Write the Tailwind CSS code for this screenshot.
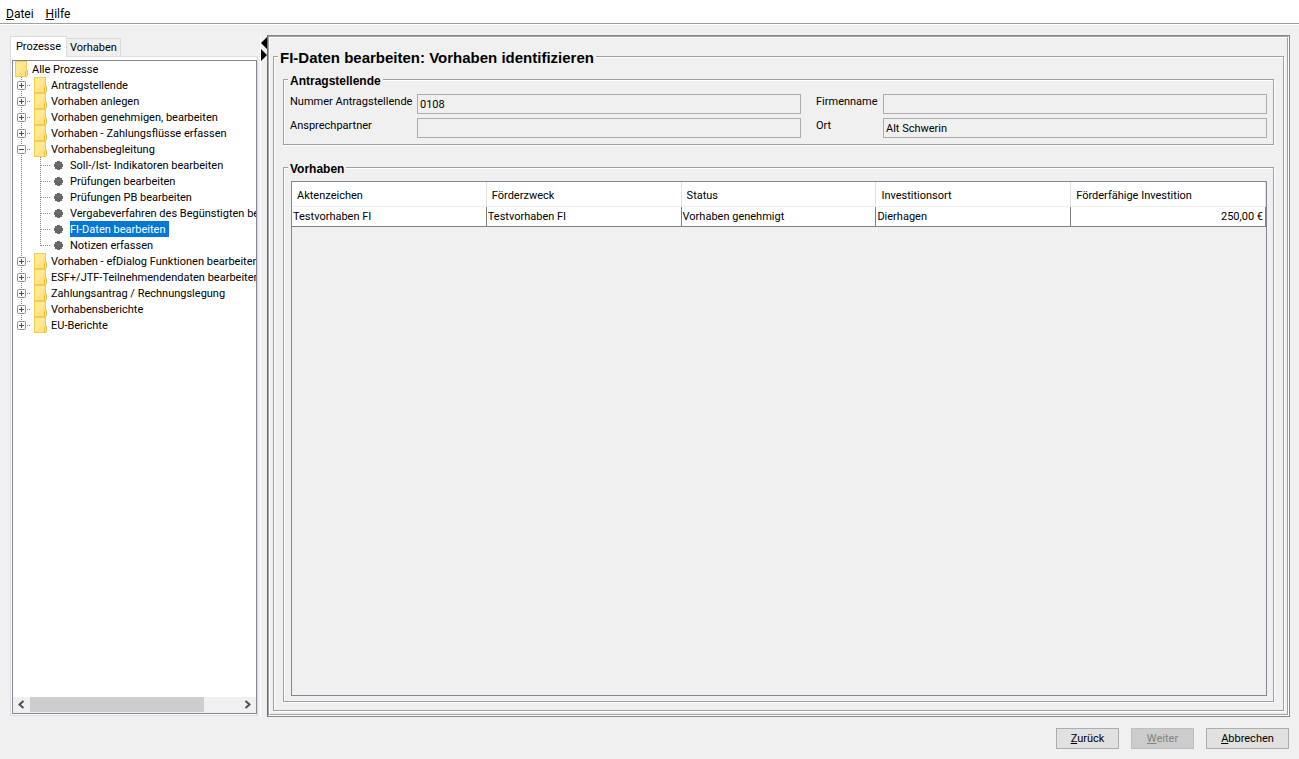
<!DOCTYPE html>
<html lang="de">
<head>
    <meta charset="UTF-8">
    <meta name="viewport" content="width=device-width, initial-scale=1.0">
    <title>FI-Daten bearbeiten</title>
    <script src="https://cdn.jsdelivr.net/npm/@tailwindcss/browser@4"></script>
</head>
<body class="flex h-screen flex-col overflow-hidden bg-[#f0f0f0] font-[Roboto,sans-serif] text-[11px] leading-4 text-black">
    <!-- Symbole -->
    <svg class="hidden">
        <symbol id="plus" viewBox="0 0 20 16">
            <path d="M8.500 0v16M14 8.500h4" stroke="#808080" stroke-dasharray="1 1" fill="none"/>
            <rect x="4.500" y="4.500" width="8" height="8" rx="1" fill="#f8f8f8" stroke="#919191"/>
            <path d="M6 8.500h5M8.500 6v5" stroke="#31489b"/>
        </symbol>
        <symbol id="plus-last" viewBox="0 0 20 16">
            <path d="M8.500 0v4M14 8.500h4" stroke="#808080" stroke-dasharray="1 1" fill="none"/>
            <rect x="4.500" y="4.500" width="8" height="8" rx="1" fill="#f8f8f8" stroke="#919191"/>
            <path d="M6 8.500h5M8.500 6v5" stroke="#31489b"/>
        </symbol>
        <symbol id="minus" viewBox="0 0 20 16">
            <path d="M8.500 0v16M14 8.500h4" stroke="#808080" stroke-dasharray="1 1" fill="none"/>
            <rect x="4.500" y="4.500" width="8" height="8" rx="1" fill="#f8f8f8" stroke="#919191"/>
            <path d="M6 8.500h5" stroke="#31489b"/>
        </symbol>
        <symbol id="line" viewBox="0 0 20 16">
            <path d="M8.500 0v16" stroke="#808080" stroke-dasharray="1 1"/>
        </symbol>
        <symbol id="branch" viewBox="0 0 20 16">
            <path d="M7.500 0v16M8 8.500h9" stroke="#808080" stroke-dasharray="1 1" fill="none"/>
        </symbol>
        <symbol id="branch-last" viewBox="0 0 20 16">
            <path d="M7.500 0v9M8 8.500h9" stroke="#808080" stroke-dasharray="1 1" fill="none"/>
        </symbol>
        <symbol id="folder" viewBox="0 0 14 16">
            <rect x="1.500" y=".5" width="11" height="15" fill="#ffe991" stroke="#f0cc58"/>
            <path d="M2 15L12 3v12z" fill="#ffe180"/>
            <path d="M11.500 15.500v-5l1-1h1v5l-1 1z" fill="#ffe68c" stroke="#e6bd3e"/>
        </symbol>
        <symbol id="dot" viewBox="0 0 11 16">
            <path d="M4 4h3v1h2v2h1v3h-1v2h-2v1h-3v-1h-2v-2h-1v-3h1v-2h2z" fill="#686868"/>
        </symbol>
    </svg>

    <nav class="flex h-6 shrink-0 items-end gap-3 border-b border-[#a0a0a0] bg-white px-[6px] pb-px text-xs shadow-[0_1px_0_white]">
        <button class="leading-4"><u>D</u>atei</button>
        <button class="leading-4"><u>H</u>ilfe</button>
    </nav>

    <div class="flex min-h-0 flex-1 pt-[11px] pr-[9px] pl-[10px]">
        <!-- Navigation -->
        <aside class="flex w-[248px] shrink-0 flex-col pt-px pb-px">
            <div class="flex items-end" role="tablist">
                <button role="tab" aria-selected="true" class="relative z-10 -mb-px h-[21px] w-[57px] border border-b-0 border-[#dcdcdc] bg-white pb-px text-center whitespace-nowrap">Prozesse</button>
                <button role="tab" aria-selected="false" class="h-[18px] w-[54px] border border-b-0 border-l-0 border-[#d9d9d9] pt-px text-center whitespace-nowrap">Vorhaben</button>
            </div>
            <div class="flex min-h-0 flex-1 flex-col border border-[#dcdcdc] bg-white pt-[3px] pb-px pl-px">
                <div class="flex min-h-0 flex-1 flex-col border border-[#828790]">
                    <ul class="min-h-0 flex-1 overflow-hidden leading-[18px] whitespace-nowrap" role="tree">
                        <li class="flex h-4 gap-1"><svg class="ml-px h-4 w-[14px] shrink-0"><use href="#folder"/></svg><span>Alle Prozesse</span></li>
                        <li class="flex h-4"><svg class="h-4 w-5 shrink-0"><use href="#plus"/></svg><svg class="mr-1 h-4 w-[14px] shrink-0"><use href="#folder"/></svg><span>Antragstellende</span></li>
                        <li class="flex h-4"><svg class="h-4 w-5 shrink-0"><use href="#plus"/></svg><svg class="mr-1 h-4 w-[14px] shrink-0"><use href="#folder"/></svg><span>Vorhaben anlegen</span></li>
                        <li class="flex h-4"><svg class="h-4 w-5 shrink-0"><use href="#plus"/></svg><svg class="mr-1 h-4 w-[14px] shrink-0"><use href="#folder"/></svg><span>Vorhaben genehmigen, bearbeiten</span></li>
                        <li class="flex h-4"><svg class="h-4 w-5 shrink-0"><use href="#plus"/></svg><svg class="mr-1 h-4 w-[14px] shrink-0"><use href="#folder"/></svg><span>Vorhaben - Zahlungsflüsse erfassen</span></li>
                        <li>
                            <div class="flex h-4"><svg class="h-4 w-5 shrink-0"><use href="#minus"/></svg><svg class="mr-1 h-4 w-[14px] shrink-0"><use href="#folder"/></svg><span>Vorhabensbegleitung</span></div>
                            <ul>
                                <li class="flex h-4"><svg class="h-4 w-5 shrink-0"><use href="#line"/></svg><svg class="h-4 w-5 shrink-0"><use href="#branch"/></svg><svg class="mr-[6px] h-4 w-[11px] shrink-0"><use href="#dot"/></svg><span>Soll-/Ist- Indikatoren bearbeiten</span></li>
                                <li class="flex h-4"><svg class="h-4 w-5 shrink-0"><use href="#line"/></svg><svg class="h-4 w-5 shrink-0"><use href="#branch"/></svg><svg class="mr-[6px] h-4 w-[11px] shrink-0"><use href="#dot"/></svg><span>Prüfungen bearbeiten</span></li>
                                <li class="flex h-4"><svg class="h-4 w-5 shrink-0"><use href="#line"/></svg><svg class="h-4 w-5 shrink-0"><use href="#branch"/></svg><svg class="mr-[6px] h-4 w-[11px] shrink-0"><use href="#dot"/></svg><span>Prüfungen PB bearbeiten</span></li>
                                <li class="flex h-4"><svg class="h-4 w-5 shrink-0"><use href="#line"/></svg><svg class="h-4 w-5 shrink-0"><use href="#branch"/></svg><svg class="mr-[6px] h-4 w-[11px] shrink-0"><use href="#dot"/></svg><span>Vergabeverfahren des Begünstigten bearbeiten</span></li>
                                <li class="flex h-4"><svg class="h-4 w-5 shrink-0"><use href="#line"/></svg><svg class="h-4 w-5 shrink-0"><use href="#branch"/></svg><svg class="mr-[6px] h-4 w-[11px] shrink-0"><use href="#dot"/></svg><span class="bg-[#0078d7] pr-1 text-white" aria-selected="true">FI-Daten bearbeiten</span></li>
                                <li class="flex h-4"><svg class="h-4 w-5 shrink-0"><use href="#line"/></svg><svg class="h-4 w-5 shrink-0"><use href="#branch-last"/></svg><svg class="mr-[6px] h-4 w-[11px] shrink-0"><use href="#dot"/></svg><span>Notizen erfassen</span></li>
                            </ul>
                        </li>
                        <li class="flex h-4"><svg class="h-4 w-5 shrink-0"><use href="#plus"/></svg><svg class="mr-1 h-4 w-[14px] shrink-0"><use href="#folder"/></svg><span>Vorhaben - efDialog Funktionen bearbeiten</span></li>
                        <li class="flex h-4"><svg class="h-4 w-5 shrink-0"><use href="#plus"/></svg><svg class="mr-1 h-4 w-[14px] shrink-0"><use href="#folder"/></svg><span>ESF+/JTF-Teilnehmendendaten bearbeiten</span></li>
                        <li class="flex h-4"><svg class="h-4 w-5 shrink-0"><use href="#plus"/></svg><svg class="mr-1 h-4 w-[14px] shrink-0"><use href="#folder"/></svg><span>Zahlungsantrag / Rechnungslegung</span></li>
                        <li class="flex h-4"><svg class="h-4 w-5 shrink-0"><use href="#plus"/></svg><svg class="mr-1 h-4 w-[14px] shrink-0"><use href="#folder"/></svg><span>Vorhabensberichte</span></li>
                        <li class="flex h-4"><svg class="h-4 w-5 shrink-0"><use href="#plus-last"/></svg><svg class="mr-1 h-4 w-[14px] shrink-0"><use href="#folder"/></svg><span>EU-Berichte</span></li>
                    </ul>
                    <div class="flex h-4 shrink-0 bg-[#f0f0f0]">
                        <button aria-label="Nach links" class="h-4 w-[17px]"><svg class="h-4 w-[17px]" fill="none" stroke="#505050" stroke-width="2"><path d="M10.500 4L6.500 7.500l4 3.500"/></svg></button>
                        <div class="flex-1"><div class="h-[15px] w-5/6 bg-[#cdcdcd]"></div></div>
                        <button aria-label="Nach rechts" class="h-4 w-[17px]"><svg class="h-4 w-[17px]" fill="none" stroke="#505050" stroke-width="2"><path d="M6.500 4l4 3.500-4 3.500"/></svg></button>
                    </div>
                </div>
            </div>
        </aside>

        <!-- Teiler -->
        <div class="ml-[2px] w-[7px] shrink-0 border-l border-white">
            <button aria-label="Teiler verschieben" class="block pt-[2px]"><svg class="block h-6 w-[6px]" viewBox="0 0 6 24"><path d="M6 0v12L0 6zM0 12v12l6-6z"/></svg></button>
        </div>

        <main class="flex min-w-0 flex-1 border border-[#828790] border-l-[#696d75]">
            <div class="flex min-w-0 flex-1 border border-t-[#a0a0a0] border-r-white border-b-white border-l-[#a0a0a0]">
                <div class="flex min-w-0 flex-1 border border-t-white border-r-[#a0a0a0] border-b-[#a0a0a0] border-l-white px-[3px] pt-2 pb-[3px]">
                    <fieldset class="flex min-w-0 flex-1 flex-col border border-[#a0a0a0] px-[9px] pt-1 pb-2 shadow-[1px_1px_0_white,inset_1px_1px_0_white]">
                        <legend class="ml-[-5px] bg-[#f0f0f0] px-[2px] pt-1 font-['Liberation_Sans',sans-serif] text-[15px] leading-4 font-bold">FI-Daten bearbeiten: Vorhaben identifizieren</legend>

                        <fieldset class="mb-[13px] min-w-0 border border-[#a0a0a0] p-[6px] shadow-[1px_1px_0_white,inset_1px_1px_0_white]">
                            <legend class="ml-[-2px] bg-[#f0f0f0] px-[2px] pt-1 font-['Liberation_Sans',sans-serif] text-xs leading-[14px] font-bold">Antragstellende</legend>
                            <div class="grid grid-cols-[127px_1fr_82px_1fr] gap-y-1 whitespace-nowrap">
                                <label for="nummer">Nummer Antragstellende</label>
                                <input id="nummer" value="0108" readonly class="h-5 min-w-0 border border-[#abadb3] px-[2px]">
                                <label for="firma" class="pl-[15px]">Firmenname</label>
                                <input id="firma" readonly class="h-5 min-w-0 border border-[#abadb3] px-[2px]">
                                <label for="partner">Ansprechpartner</label>
                                <input id="partner" readonly class="h-5 min-w-0 border border-[#abadb3] px-[2px]">
                                <label for="ort" class="pl-[15px]">Ort</label>
                                <input id="ort" value="Alt Schwerin" readonly class="h-5 min-w-0 border border-[#abadb3] px-[2px]">
                            </div>
                        </fieldset>

                        <fieldset class="flex min-h-0 min-w-0 flex-1 flex-col border border-[#a0a0a0] pt-[5px] pr-[6px] pb-[5px] pl-[7px] shadow-[1px_1px_0_white,inset_1px_1px_0_white]">
                            <legend class="ml-[-3px] bg-[#f0f0f0] px-[2px] pt-1 font-['Liberation_Sans',sans-serif] text-xs leading-[14px] font-bold">Vorhaben</legend>
                            <div class="min-h-0 flex-1 border border-[#828790]">
                                <table class="w-full table-fixed border-separate border-spacing-0 bg-white text-left">
                                    <thead>
                                        <tr class="h-[25px]">
                                            <th class="border-r border-b border-r-[#e0e0e0] border-b-[#f0f0f0] pt-[3px] pl-[5px] font-normal">Aktenzeichen</th>
                                            <th class="border-r border-b border-r-[#e0e0e0] border-b-[#f0f0f0] pt-[3px] pl-[5px] font-normal">Förderzweck</th>
                                            <th class="border-r border-b border-r-[#e0e0e0] border-b-[#f0f0f0] pt-[3px] pl-[5px] font-normal">Status</th>
                                            <th class="border-r border-b border-r-[#e0e0e0] border-b-[#f0f0f0] pt-[3px] pl-[5px] font-normal">Investitionsort</th>
                                            <th class="border-r border-b border-r-[#e0e0e0] border-b-[#f0f0f0] pt-[3px] pl-[5px] font-normal">Förderfähige Investition</th>
                                        </tr>
                                    </thead>
                                    <tbody>
                                        <tr class="h-5">
                                            <td class="border-r border-b border-[#808080] pl-px">Testvorhaben FI</td>
                                            <td class="border-r border-b border-[#808080] pl-px">Testvorhaben FI</td>
                                            <td class="border-r border-b border-[#808080] pl-px">Vorhaben genehmigt</td>
                                            <td class="border-r border-b border-[#808080] pl-px">Dierhagen</td>
                                            <td class="border-r border-b border-[#808080] pr-[2px] text-right">250,00 €</td>
                                        </tr>
                                    </tbody>
                                </table>
                            </div>
                        </fieldset>
                    </fieldset>
                </div>
            </div>
        </main>
    </div>

    <footer class="flex shrink-0 justify-end gap-3 pt-[11px] pr-[10px] pb-[10px]">
        <button class="h-[21px] w-[63px] border border-[#adadad] bg-[#e1e1e1]"><u>Z</u>urück</button>
        <button disabled class="h-[21px] w-[63px] border border-[#bfbfbf] bg-[#cccccc] text-[#838383]"><u>W</u>eiter</button>
        <button class="h-[21px] w-[83px] border border-[#adadad] bg-[#e1e1e1]"><u>A</u>bbrechen</button>
    </footer>
</body>
</html>
